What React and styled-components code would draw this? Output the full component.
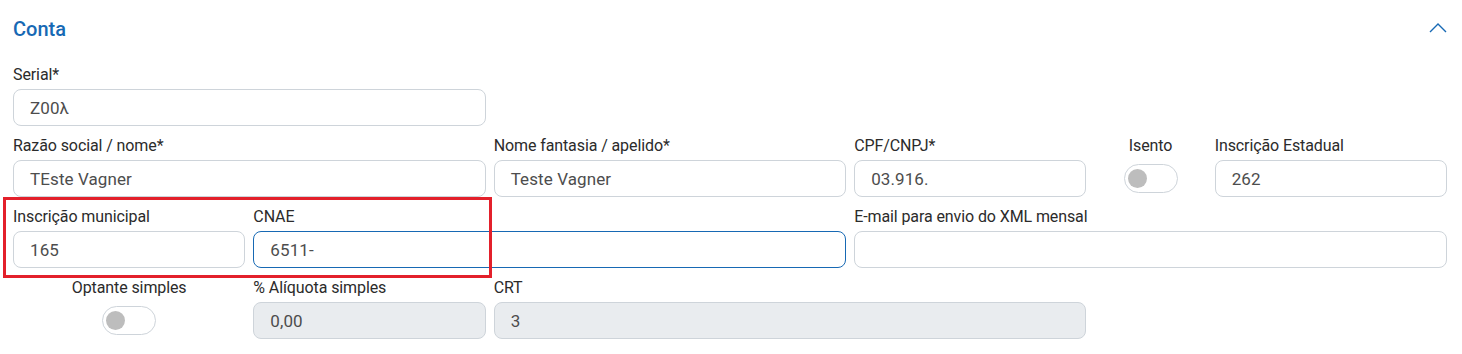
import React from "react";
import styled, { createGlobalStyle } from "styled-components";

const Global = createGlobalStyle`
  html, body { margin: 0; padding: 0; background: #fff; }
  body { font-family: Roboto, "Noto Sans", sans-serif; color: #212529; }
  * { box-sizing: border-box; }
`;

const Page = styled.div`
  position: relative;
  width: 1462px;
  height: 354px;
  padding: 0 15px 0 13px;
  overflow: hidden;
`;

const Header = styled.div`
  display: flex;
  align-items: center;
  justify-content: space-between;
  height: 57px;
`;

const Title = styled.h2`
  margin: 0;
  font-size: 20px;
  font-weight: 500;
  color: #1769b4;
  line-height: 24px;
`;

const Chevron = styled.svg`
  width: 18px;
  height: 10px;
  margin-right: 0;
  margin-top: -2px;
`;

const Grid = styled.div`
  display: grid;
  grid-template-columns: repeat(12, 1fr);
  column-gap: 8px;
  row-gap: 10px;
  padding-top: 8px;
`;

const Field = styled.div`
  grid-column: span ${(p) => p.$span};
  display: flex;
  flex-direction: column;
  align-items: ${(p) => (p.$center ? "center" : "stretch")};
  min-width: 0;
`;

const Label = styled.label`
  font-size: 16px;
  line-height: 20px;
  color: #2b2b2b;
  margin-bottom: 4px;
  white-space: nowrap;
  letter-spacing: -0.1px;
`;

const Input = styled.div`
  height: 37px;
  border: 1px solid ${(p) => (p.$focus ? "#1769b4" : "#ced4da")};
  border-radius: 8px;
  background: ${(p) => (p.$disabled ? "#e9ecef" : "#fff")};
  padding: 0 16px;
  display: flex;
  align-items: center;
  font-size: 17px;
  font-weight: 400;
  color: #4d4d4d;
  letter-spacing: 0.1px;
`;

const Switch = styled.div`
  width: 54px;
  height: 29px;
  margin-top: 4px;
  border: 1px solid #ced4da;
  border-radius: 15px;
  background: #fff;
  display: flex;
  align-items: center;
  padding-left: 3px;
`;

const Knob = styled.div`
  width: 19px;
  height: 19px;
  border-radius: 50%;
  background: #bdbdbd;
`;

const Highlight = styled.div`
  position: absolute;
  left: 3px;
  top: 197px;
  width: 489px;
  height: 81px;
  border: 3px solid #e3202b;
  pointer-events: none;
`;

const Empty = styled.div`
  grid-column: span ${(p) => p.$span};
`;

function TextField({ span, label, value, focus, disabled }) {
  return (
    <Field $span={span}>
      <Label>{label}</Label>
      <Input $focus={focus} $disabled={disabled}>{value}</Input>
    </Field>
  );
}

function Toggle({ span, label }) {
  return (
    <Field $span={span} $center>
      <Label>{label}</Label>
      <Switch>
        <Knob />
      </Switch>
    </Field>
  );
}

export default function App() {
  return (
    <>
      <Global />
      <Page>
        <Header>
          <Title>Conta</Title>
          <Chevron viewBox="0 0 18 10" fill="none">
            <path d="M1 9 L9 1 L17 9" stroke="#1769b4" strokeWidth="1.4" />
          </Chevron>
        </Header>
        <Grid>
          <TextField span={4} label="Serial*" value="Z00λ" />
          <Empty $span={8} />

          <TextField span={4} label="Razão social / nome*" value="TEste Vagner" />
          <TextField span={3} label="Nome fantasia / apelido*" value="Teste Vagner" />
          <TextField span={2} label="CPF/CNPJ*" value="03.916." />
          <Toggle span={1} label="Isento" />
          <TextField span={2} label="Inscrição Estadual" value="262" />

          <TextField span={2} label="Inscrição municipal" value="165" />
          <TextField span={5} label="CNAE" value="6511-" focus />
          <TextField span={5} label="E-mail para envio do XML mensal" value="" />

          <Toggle span={2} label="Optante simples" />
          <TextField span={2} label="% Alíquota simples" value="0,00" disabled />
          <TextField span={5} label="CRT" value="3" disabled />
          <Empty $span={3} />
        </Grid>
        <Highlight />
      </Page>
    </>
  );
}
